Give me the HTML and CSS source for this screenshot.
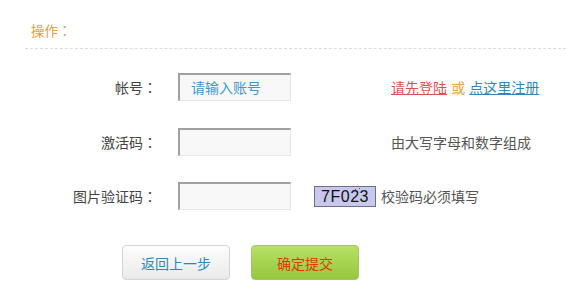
FILE: index.html
```html
<!DOCTYPE html>
<html lang="zh-CN">
<head>
<meta charset="utf-8">
<title>操作</title>
<link rel="stylesheet" href="styles.css">
</head>
<body>
<div class="page">
  <div class="section-title">操作<span class="colon" lang="zh-TW">：</span></div>
  <div class="form">
    <div class="row">
      <label class="label">帐号<span class="colon" lang="zh-TW">：</span></label>
      <div class="field">
        <div class="input placeholder">请输入账号</div>
      </div>
      <div class="hint">
        <a class="link-red" href="#">请先登陆</a>
        <span class="or">或</span>
        <a class="link-blue" href="#">点这里注册</a>
      </div>
    </div>
    <div class="row">
      <label class="label">激活码<span class="colon" lang="zh-TW">：</span></label>
      <div class="field">
        <div class="input"></div>
      </div>
      <div class="hint">由大写字母和数字组成</div>
    </div>
    <div class="row">
      <label class="label">图片验证码<span class="colon" lang="zh-TW">：</span></label>
      <div class="field captcha-field">
        <div class="input"></div>
        <div class="captcha"><span class="noise n1"></span><span class="noise n2"></span><span class="noise n3"></span>7F023</div>
        <span class="captcha-hint">校验码必须填写</span>
      </div>
    </div>
    <div class="buttons">
      <button class="btn btn-back" type="button">返回上一步</button>
      <button class="btn btn-submit" type="button">确定提交</button>
    </div>
  </div>
</div>
</body>
</html>
```

FILE: styles.css
```css
html, body {
  margin: 0;
  padding: 0;
  background: #ffffff;
}
body {
  font-family: "Noto Sans CJK SC", "Liberation Sans", sans-serif;
  font-size: 14px;
  color: #444;
}
.page {
  width: 566px;
  height: 296px;
  overflow: hidden;
}
.colon {
  font-family: "Noto Sans CJK TC", sans-serif;
}
.section-title {
  margin-left: 31px;
  padding-top: 20px;
  height: 20px;
  line-height: 20px;
  font-size: 13.5px;
  color: #e8a040;
}
.form {
  margin-left: 25px;
  border-top: 1px dashed #dcdcdc;
  margin-top: 8px;
  padding-top: 24px;
}
.row {
  display: flex;
  align-items: center;
  height: 28px;
  margin-bottom: 26px;
}
.row:first-child {
  margin-bottom: 27px;
}
.label {
  width: 132px;
  text-align: right;
  color: #444;
  flex: none;
}
.field {
  margin-left: 21px;
  width: 213px;
  flex: none;
  display: flex;
  align-items: center;
}
.input {
  box-sizing: border-box;
  width: 113px;
  height: 28px;
  background: #f8f8f8;
  border-top: 2px solid #a0a0a0;
  border-left: 2px solid #a0a0a0;
  border-right: 1px solid #e6e6e6;
  border-bottom: 1px solid #e6e6e6;
  padding-left: 11px;
  line-height: 24px;
}
.placeholder {
  color: #3a9ad0;
}
.hint {
  color: #555;
  line-height: 20px;
}
.link-red {
  color: #e05050;
  text-decoration: underline;
}
.or {
  color: #e8a040;
  margin: 0 1px;
}
.link-blue {
  color: #2a8ac0;
  text-decoration: underline;
}
.captcha-field {
  width: auto;
}
.captcha {
  position: relative;
  margin-left: 23px;
  box-sizing: border-box;
  width: 62px;
  height: 21px;
  background: #c8c8ef;
  border: 1px solid #707080;
  font-family: "Liberation Sans", sans-serif;
  font-size: 16px;
  line-height: 20px;
  text-align: center;
  color: #111;
  letter-spacing: 0.5px;
}
.noise {
  position: absolute;
  width: 1px;
  height: 1px;
  background: #555;
}
.n1 { left: 40px; top: 2px; }
.n2 { left: 44px; top: 1px; }
.n3 { left: 48px; top: 3px; }
.captcha-hint {
  margin-left: 5px;
  color: #555;
}
.buttons {
  display: flex;
  gap: 21px;
  margin-left: 97px;
  margin-top: 35px;
}
.btn {
  box-sizing: border-box;
  width: 108px;
  height: 35px;
  border-radius: 4px;
  font-family: "Noto Sans CJK SC", sans-serif;
  font-size: 14px;
  padding: 0;
  cursor: pointer;
}
.btn-back {
  background: linear-gradient(#fdfdfd, #eaeaea);
  border: 1px solid #d4d4d4;
  color: #2a8ac0;
}
.btn-submit {
  background: linear-gradient(#b8e066, #96c63e);
  border: 1px solid #a0c860;
  color: #e03a00;
}
```
